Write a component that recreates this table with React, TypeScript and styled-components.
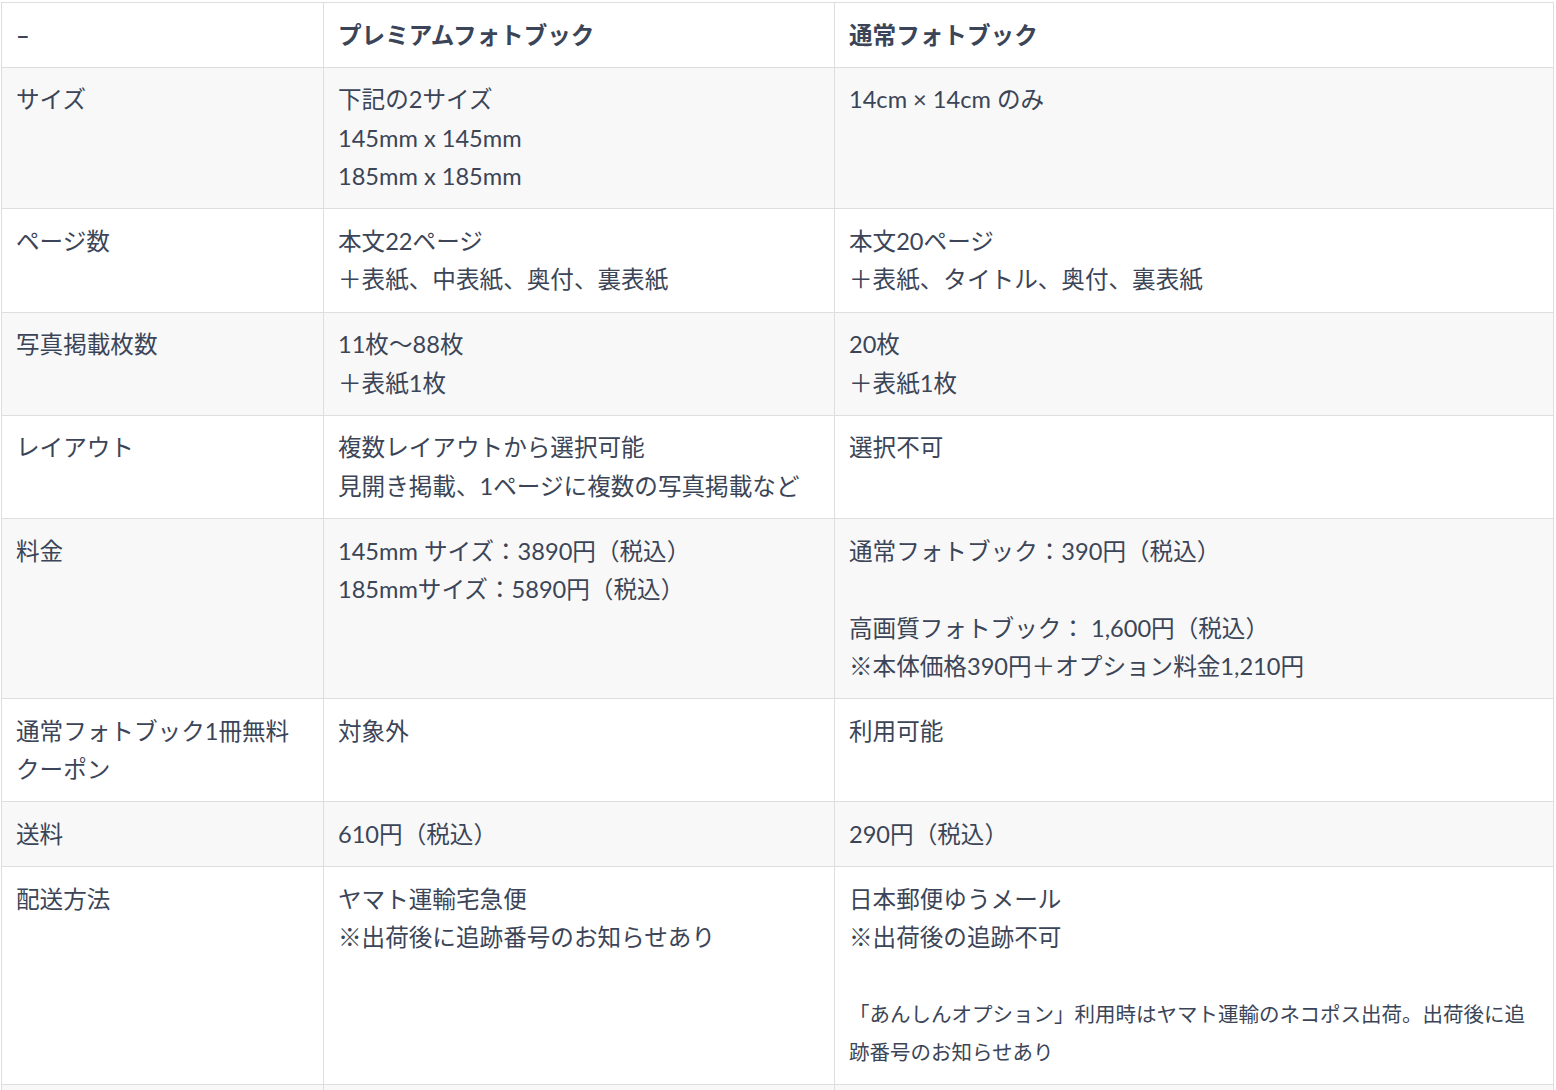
import React from "react";
import styled, { createGlobalStyle } from "styled-components";

const Global = createGlobalStyle`
  html, body { margin: 0; padding: 0; background: #ffffff; }
  body { font-family: Lato, "Noto Sans CJK JP", sans-serif; color: #3b4557; }
`;

const Wrap = styled.div`
  padding: 2px 0 0 1px;
  width: 1552px;
`;

const Table = styled.table`
  width: 1552px;
  border-collapse: collapse;
  table-layout: fixed;
  font-size: 23.6px;
  line-height: 38.5px;
`;

const Row = styled.tr<{ $shade?: boolean }>`
  background: ${(p) => (p.$shade ? "#f8f8f8" : "#ffffff")};
`;

const Cell = styled.td`
  border: 1px solid #dedede;
  padding: 12.6px 14px 12.6px 14px;
  vertical-align: top;
  text-align: left;
`;

const HeadCell = styled(Cell).attrs({ as: "th" })`
  font-weight: 700;
`;

const Small = styled.span`
  display: block;
  margin-top: 1px;
  font-size: 20.5px;
  line-height: 37.5px;
`;

const rows: { label: React.ReactNode; a: React.ReactNode; b: React.ReactNode }[] = [
  {
    label: "サイズ",
    a: (<>下記の2サイズ<br />145mm x 145mm<br />185mm x 185mm</>),
    b: "14cm × 14cm のみ",
  },
  {
    label: "ページ数",
    a: (<>本文22ページ<br />＋表紙、中表紙、奥付、裏表紙</>),
    b: (<>本文20ページ<br />＋表紙、タイトル、奥付、裏表紙</>),
  },
  {
    label: "写真掲載枚数",
    a: (<>11枚〜88枚<br />＋表紙1枚</>),
    b: (<>20枚<br />＋表紙1枚</>),
  },
  {
    label: "レイアウト",
    a: (<>複数レイアウトから選択可能<br />見開き掲載、1ページに複数の写真掲載など</>),
    b: "選択不可",
  },
  {
    label: "料金",
    a: (<>145mm サイズ：3890円（税込）<br />185mmサイズ：5890円（税込）</>),
    b: (<>通常フォトブック：390円（税込）<br /><br />高画質フォトブック： 1,600円（税込）<br />※本体価格390円＋オプション料金1,210円</>),
  },
  {
    label: (<>通常フォトブック1冊無料<br />クーポン</>),
    a: "対象外",
    b: "利用可能",
  },
  {
    label: "送料",
    a: "610円（税込）",
    b: "290円（税込）",
  },
  {
    label: "配送方法",
    a: (<>ヤマト運輸宅急便<br />※出荷後に追跡番号のお知らせあり</>),
    b: (<>日本郵便ゆうメール<br />※出荷後の追跡不可<br /><br /><Small>「あんしんオプション」利用時はヤマト運輸のネコポス出荷。出荷後に追跡番号のお知らせあり</Small></>),
  },
  {
    label: "\u00a0",
    a: "\u00a0",
    b: "\u00a0",
  },
];

export default function App() {
  return (
    <>
      <Global />
      <Wrap>
        <Table>
          <colgroup>
            <col style={{ width: 322 }} />
            <col style={{ width: 511 }} />
            <col style={{ width: 719 }} />
          </colgroup>
          <thead>
            <Row>
              <HeadCell>–</HeadCell>
              <HeadCell>プレミアムフォトブック</HeadCell>
              <HeadCell>通常フォトブック</HeadCell>
            </Row>
          </thead>
          <tbody>
            {rows.map((r, i) => (
              <Row key={i} $shade={i % 2 === 0}>
                <Cell>{r.label}</Cell>
                <Cell>{r.a}</Cell>
                <Cell>{r.b}</Cell>
              </Row>
            ))}
          </tbody>
        </Table>
      </Wrap>
    </>
  );
}
